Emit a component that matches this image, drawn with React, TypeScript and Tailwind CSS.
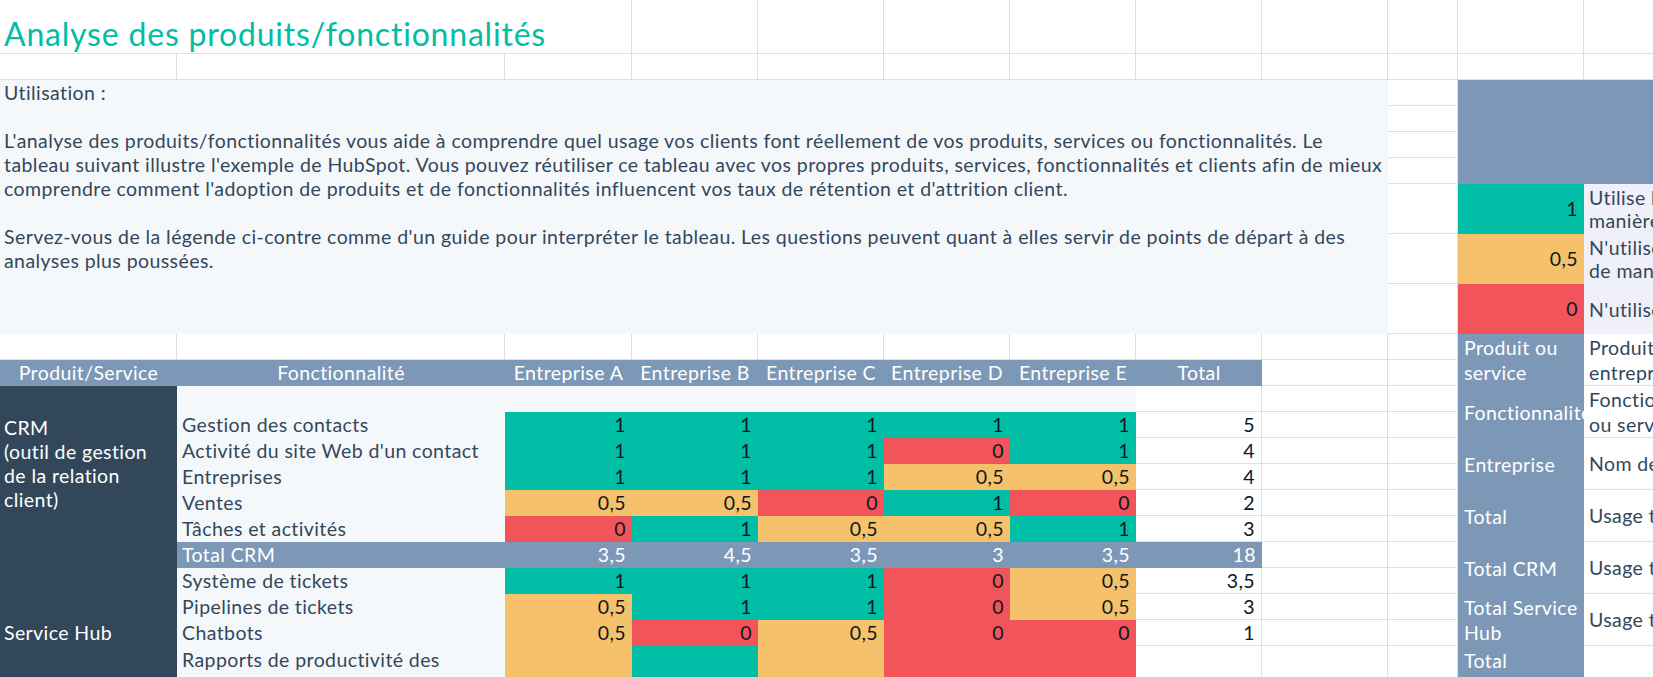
import React from 'react';

const grid = 'border-r border-b border-[#dfdfdf]';

const TEAL = 'bg-[#00bda5]';
const ORANGE = 'bg-[#f5c26b]';
const RED = 'bg-[#f2545b]';

type Row =
  | { kind: 'blank' }
  | { kind: 'data'; label: string[]; values: string[]; total: string; tall?: boolean }
  | { kind: 'total'; label: string; values: string[]; total: string };

const rows: Row[] = [
  { kind: 'blank' },
  { kind: 'data', label: ['Gestion des contacts'], values: ['1', '1', '1', '1', '1'], total: '5' },
  { kind: 'data', label: ["Activité du site Web d'un contact"], values: ['1', '1', '1', '0', '1'], total: '4' },
  { kind: 'data', label: ['Entreprises'], values: ['1', '1', '1', '0,5', '0,5'], total: '4' },
  { kind: 'data', label: ['Ventes'], values: ['0,5', '0,5', '0', '1', '0'], total: '2' },
  { kind: 'data', label: ['Tâches et activités'], values: ['0', '1', '0,5', '0,5', '1'], total: '3' },
  { kind: 'total', label: 'Total CRM', values: ['3,5', '4,5', '3,5', '3', '3,5'], total: '18' },
  { kind: 'data', label: ['Système de tickets'], values: ['1', '1', '1', '0', '0,5'], total: '3,5' },
  { kind: 'data', label: ['Pipelines de tickets'], values: ['0,5', '1', '1', '0', '0,5'], total: '3' },
  { kind: 'data', label: ['Chatbots'], values: ['0,5', '0', '0,5', '0', '0'], total: '1' },
  {
    kind: 'data',
    label: ['Rapports de productivité des', 'agents du service client'],
    values: ['0,5', '1', '0,5', '0', '0'],
    total: '2',
    tall: true,
  },
];

const companyWidths = ['w-[127px]', 'w-[126px]', 'w-[126px]', 'w-[126px]', 'w-[126px]'];

function colorFor(v: string) {
  if (v === '1') return TEAL;
  if (v === '0,5') return ORANGE;
  return RED;
}

function TableRow({ row }: { row: Row }) {
  if (row.kind === 'blank') {
    return (
      <div className="flex h-[26px]">
        <div className="w-[959px] shrink-0 bg-[#f5f8fa]" />
        <div className={`w-[126px] shrink-0 ${grid}`} />
        <div className={`w-[126px] shrink-0 ${grid}`} />
        <div className={`w-[70px] shrink-0 ${grid}`} />
      </div>
    );
  }

  if (row.kind === 'total') {
    return (
      <div className="flex h-[26px]">
        <div className="flex w-[1085px] shrink-0 items-center bg-[#7c98b6] text-white">
          <div className="w-[328px] shrink-0 pl-[5px]">{row.label}</div>
          {row.values.map((v, i) => (
            <div key={i} className={`${companyWidths[i]} shrink-0 pr-[6px] text-right`}>
              {v}
            </div>
          ))}
          <div className="w-[126px] shrink-0 pr-[6px] text-right">{row.total}</div>
        </div>
        <div className={`w-[126px] shrink-0 ${grid}`} />
        <div className={`w-[70px] shrink-0 ${grid}`} />
      </div>
    );
  }

  const h = row.tall ? 'h-[52px]' : 'h-[26px]';
  const align = row.tall ? 'items-end pb-[1px]' : 'items-center';

  return (
    <div className={`flex ${h}`}>
      <div className="flex w-[328px] shrink-0 flex-col justify-center overflow-hidden whitespace-nowrap bg-[#f5f8fa] pl-[5px] leading-[24px]">
        {row.label.map((t) => (
          <p key={t}>{t}</p>
        ))}
      </div>
      {row.values.map((v, i) => (
        <div
          key={i}
          className={`flex ${companyWidths[i]} shrink-0 justify-end ${align} ${colorFor(v)} pr-[6px] text-[#101820]`}
        >
          {v}
        </div>
      ))}
      <div className={`flex w-[126px] shrink-0 justify-end ${align} pr-[6px] text-[#101820] ${grid}`}>
        {row.total}
      </div>
      <div className={`w-[126px] shrink-0 ${grid}`} />
      <div className={`w-[70px] shrink-0 ${grid}`} />
    </div>
  );
}

const legend = [
  { value: '1', color: TEAL, lines: ['Utilise la fonctionnalité de', 'manière régulière'] },
  { value: '0,5', color: ORANGE, lines: ["N'utilise la fonctionnalité que", 'de manière occasionnelle'] },
  { value: '0', color: RED, lines: ["N'utilise pas la fonctionnalité"] },
];

const glossary = [
  { label: ['Produit ou', 'service'], desc: ["Produit ou service de l'", 'entreprise'], h: 'h-[52px]' },
  { label: ['Fonctionnalité'], desc: ['Fonctionnalité du produit', 'ou service'], h: 'h-[52px]' },
  { label: ['Entreprise'], desc: ["Nom de l'entreprise cliente"], h: 'h-[52px]' },
  { label: ['Total'], desc: ['Usage total par entreprise'], h: 'h-[52px]' },
  { label: ['Total CRM'], desc: ['Usage total du CRM'], h: 'h-[52px]' },
  { label: ['Total Service', 'Hub'], desc: ['Usage total du Service Hub'], h: 'h-[52px]' },
  { label: ['Total', 'Marketing', 'Hub'], desc: ['Usage total du Marketing Hub'], h: 'h-[78px]' },
];

export default function App() {
  return (
    <div className="h-[677px] w-[1653px] overflow-hidden bg-white font-['Lato',sans-serif] text-[19.5px] leading-[24px] tracking-[0.4px] text-[#33475b]">
      {/* title row */}
      <div className="flex h-[54px]">
        <div className={`flex w-[632px] shrink-0 items-end pb-[3px] pl-[4px] ${grid}`}>
          <h1 className="whitespace-nowrap text-[32px] font-normal leading-none tracking-[0.8px] text-[#00bda5]">
            Analyse des produits/fonctionnalités
          </h1>
        </div>
        <div className={`w-[126px] shrink-0 ${grid}`} />
        <div className={`w-[126px] shrink-0 ${grid}`} />
        <div className={`w-[126px] shrink-0 ${grid}`} />
        <div className={`w-[126px] shrink-0 ${grid}`} />
        <div className={`w-[126px] shrink-0 ${grid}`} />
        <div className={`w-[126px] shrink-0 ${grid}`} />
        <div className={`w-[70px] shrink-0 ${grid}`} />
        <div className={`w-[126px] shrink-0 ${grid}`} />
        <div className={`w-[300px] shrink-0 ${grid}`} />
      </div>
      <div className="flex h-[26px]">
        <div className={`w-[177px] shrink-0 ${grid}`} />
        <div className={`w-[328px] shrink-0 ${grid}`} />
        <div className={`w-[127px] shrink-0 ${grid}`} />
        <div className={`w-[126px] shrink-0 ${grid}`} />
        <div className={`w-[126px] shrink-0 ${grid}`} />
        <div className={`w-[126px] shrink-0 ${grid}`} />
        <div className={`w-[126px] shrink-0 ${grid}`} />
        <div className={`w-[126px] shrink-0 ${grid}`} />
        <div className={`w-[126px] shrink-0 ${grid}`} />
        <div className={`w-[70px] shrink-0 ${grid}`} />
        <div className={`w-[126px] shrink-0 ${grid}`} />
        <div className={`w-[300px] shrink-0 ${grid}`} />
      </div>

      <div className="flex">
        {/* left side: intro + table */}
        <div className="w-[1458px] shrink-0">
          <div className="flex h-[254px]">
            <div className="w-[1388px] shrink-0 overflow-hidden whitespace-nowrap bg-[#f5f8fa] pl-[4px] pt-[1px] text-[19.5px] leading-[24px] tracking-[0.42px]">
              <p>Utilisation :</p>
              <p>&nbsp;</p>
              <p>
                L'analyse des produits/fonctionnalités vous aide à comprendre quel usage vos clients font réellement
                de vos produits, services ou fonctionnalités. Le
              </p>
              <p>
                tableau suivant illustre l'exemple de HubSpot. Vous pouvez réutiliser ce tableau avec vos propres
                produits, services, fonctionnalités et clients afin de mieux
              </p>
              <p>
                comprendre comment l'adoption de produits et de fonctionnalités influencent vos taux de rétention et
                d'attrition client.
              </p>
              <p>&nbsp;</p>
              <p>
                Servez-vous de la légende ci-contre comme d'un guide pour interpréter le tableau. Les questions
                peuvent quant à elles servir de points de départ à des
              </p>
              <p>analyses plus poussées.</p>
            </div>
            <div className="flex w-[70px] shrink-0 flex-col">
              <div className={`h-[26px] ${grid}`} />
              <div className={`h-[26px] ${grid}`} />
              <div className={`h-[26px] ${grid}`} />
              <div className={`h-[26px] ${grid}`} />
              <div className={`h-[50px] ${grid}`} />
              <div className={`h-[50px] ${grid}`} />
              <div className={`h-[50px] ${grid}`} />
            </div>
          </div>

          {/* empty spacer row */}
          <div className="flex h-[26px]">
            <div className={`w-[177px] shrink-0 ${grid}`} />
            <div className={`w-[328px] shrink-0 ${grid}`} />
            <div className={`w-[127px] shrink-0 ${grid}`} />
            <div className={`w-[126px] shrink-0 ${grid}`} />
            <div className={`w-[126px] shrink-0 ${grid}`} />
            <div className={`w-[126px] shrink-0 ${grid}`} />
            <div className={`w-[126px] shrink-0 ${grid}`} />
            <div className={`w-[126px] shrink-0 ${grid}`} />
            <div className={`w-[126px] shrink-0 ${grid}`} />
            <div className={`w-[70px] shrink-0 ${grid}`} />
          </div>

          {/* header */}
          <div className="flex h-[26px]">
            <div className="flex w-[1262px] shrink-0 items-center bg-[#7c98b6] text-center text-white">
              <div className="w-[177px] shrink-0">Produit/Service</div>
              <div className="w-[328px] shrink-0">Fonctionnalité</div>
              <div className="w-[127px] shrink-0">Entreprise A</div>
              <div className="w-[126px] shrink-0">Entreprise B</div>
              <div className="w-[126px] shrink-0">Entreprise C</div>
              <div className="w-[126px] shrink-0">Entreprise D</div>
              <div className="w-[126px] shrink-0">Entreprise E</div>
              <div className="w-[126px] shrink-0">Total</div>
            </div>
            <div className={`w-[126px] shrink-0 ${grid}`} />
            <div className={`w-[70px] shrink-0 ${grid}`} />
          </div>

          {/* body */}
          <div className="flex">
            <div className="w-[177px] shrink-0 bg-[#33475b] text-white">
              <div className="flex h-[156px] flex-col justify-center pl-[4px]">
                <p>CRM</p>
                <p>(outil de gestion</p>
                <p>de la relation</p>
                <p>client)</p>
              </div>
              <div className="flex h-[182px] flex-col justify-center pl-[4px]">
                <p>Service Hub</p>
              </div>
            </div>
            <div className="w-[1281px] shrink-0">
              {rows.map((r, i) => (
                <TableRow key={i} row={r} />
              ))}
            </div>
          </div>
        </div>

        {/* right side: legend */}
        <div className="w-[300px] shrink-0">
          <div className="h-[104px] bg-[#7c98b6]" />
          {legend.map((l) => (
            <div key={l.value} className="flex h-[50px]">
              <div className={`flex w-[126px] shrink-0 items-center justify-end pr-[6px] text-[#101820] ${l.color}`}>
                {l.value}
              </div>
              <div className="flex flex-1 flex-col justify-center whitespace-nowrap bg-[#eff0fa] pl-[5px] leading-[23px]">
                {l.lines.map((t) => (
                  <p key={t}>{t}</p>
                ))}
              </div>
            </div>
          ))}
          {glossary.map((g, i) => (
            <div key={i} className={`flex ${g.h}`}>
              <div className="flex w-[126px] shrink-0 flex-col justify-center overflow-hidden whitespace-nowrap bg-[#7c98b6] pl-[6px] leading-[25px] text-white">
                {g.label.map((t) => (
                  <p key={t}>{t}</p>
                ))}
              </div>
              <div className={`flex flex-1 flex-col justify-center whitespace-nowrap pl-[5px] leading-[25px] ${grid}`}>
                {g.desc.map((t) => (
                  <p key={t}>{t}</p>
                ))}
              </div>
            </div>
          ))}
        </div>
      </div>
    </div>
  );
}
